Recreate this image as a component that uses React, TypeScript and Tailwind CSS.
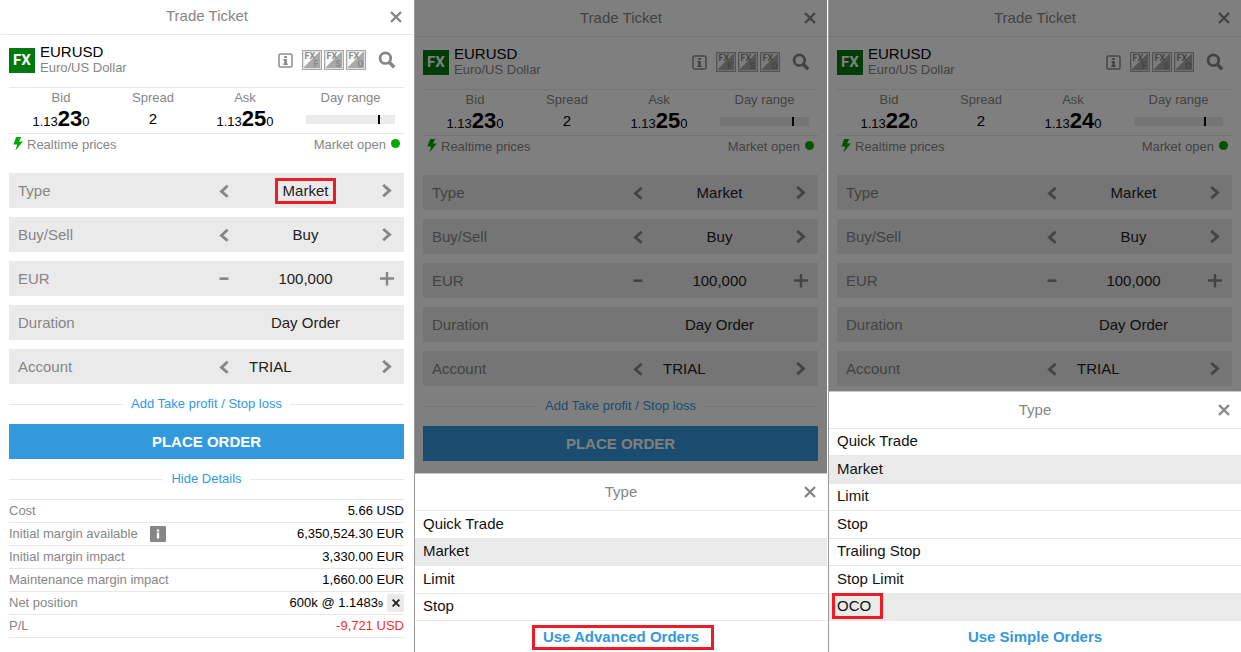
import type { ReactNode } from "react";

const FX_KINDS = ["F", "S", "O"];

function CloseIcon() {
  return (
    <svg viewBox="0 0 12 12" className="size-3" fill="none" stroke="currentColor" strokeWidth="2.4">
      <path d="M1 1l10 10M11 1L1 11" />
    </svg>
  );
}

function ChevronLeft() {
  return (
    <svg viewBox="0 0 10 14" className="h-3.5 w-2.5" fill="none" stroke="currentColor" strokeWidth="2.8">
      <path d="M8.6 1.8L2.4 7.4l6.2 5.4" />
    </svg>
  );
}

function ChevronRight() {
  return (
    <svg viewBox="0 0 10 14" className="h-3.5 w-2.5" fill="none" stroke="currentColor" strokeWidth="2.8">
      <path d="M1.2 1l6.4 5.6-6.4 5.6" />
    </svg>
  );
}

function MinusIcon() {
  return (
    <svg viewBox="0 0 10 14" className="h-3.5 w-2.5" fill="currentColor">
      <path d="M.5 5.4h9V8h-9z" />
    </svg>
  );
}

function PlusIcon() {
  return (
    <svg viewBox="0 0 14 14" className="size-3.5" fill="currentColor">
      <path d="M5.8 0h2.4v5.3H14v2.5H8.2V13.4H5.8V7.8H0V5.3h5.8z" />
    </svg>
  );
}

function InfoIcon() {
  return (
    <svg viewBox="0 0 15 15" className="size-[15px]">
      <rect x="1" y="1" width="13" height="13" rx="1.6" fill="none" stroke="#8c8c8c" strokeWidth="1.5" />
      <path d="M6.3 3h2.5v2H6.3zM5.4 6h3.4v4.5h.9V12H5.3v-1.5h1V7.4h-.9z" fill="#858585" />
    </svg>
  );
}

function FxKindIcon({ kind }: { kind: string }) {
  return (
    <svg viewBox="0 0 20 20" className="size-5">
      <rect width="20" height="20" fill="#a8a8a8" />
      <path d="M1 1h18v18H1z" fill="#e0e0e0" />
      <path d="M2 2h16v16H2z" fill="#aaaaaa" />
      <path d="M2 2h15L2 17z" fill="#fbfbfb" />
      <text x="2.6" y="9.4" fontSize="9" fontWeight="700" fontFamily="Roboto, sans-serif" fill="#8a8a8a">FX</text>
      <text x="11.6" y="16.6" fontSize="9" fontWeight="700" fontFamily="Roboto, sans-serif" fill="#888888">{kind}</text>
    </svg>
  );
}

function SearchIcon() {
  return (
    <svg viewBox="0 0 18 18" className="size-[18px]" fill="none" stroke="#858585">
      <circle cx="7.4" cy="7.2" r="5.3" strokeWidth="2.7" />
      <path d="M11.2 11.2l5 5" strokeWidth="3.4" />
    </svg>
  );
}

function BoltIcon() {
  return (
    <svg viewBox="0 0 10 16" className="h-4 w-2.5" fill="#00a800">
      <path d="M3.2 0h5L6 4.4h3.8L2.4 13.6l1.8-6H.4z" />
    </svg>
  );
}

function TitleBar({ title, tall = false }: { title: string; tall?: boolean }) {
  return (
    <header
      className={`relative flex items-center justify-center border-b border-[#e8e8e8] text-[15px] text-[#868686] ${
        tall ? "h-[37px]" : "h-[35px] pb-px"
      }`}
    >
      <h2>{title}</h2>
      <button type="button" aria-label="Close" className="absolute right-[11px] text-[#868686]">
        <CloseIcon />
      </button>
    </header>
  );
}

function Price({ label, big }: { label: string; big: string }) {
  return (
    <div className="text-center">
      <div className="leading-[19px] text-[#868686]">{label}</div>
      <div className="leading-6 text-black">
        <span className="text-[13px]">1.13</span>
        <span className="text-[22px] font-bold">{big}</span>
        <span className="text-[13px]">0</span>
      </div>
    </div>
  );
}

function Field({
  label,
  before,
  after,
  children,
}: {
  label: string;
  before?: ReactNode;
  after?: ReactNode;
  children: ReactNode;
}) {
  return (
    <div className="flex h-[35px] items-center bg-[#eaeaea] pl-[9px] text-[15px] text-[#868686]">
      <div className="flex-1 pt-px">{label}</div>
      <div className="flex w-[197px] items-center">
        <div className="flex w-[34px] justify-center">
          {before && (
            <button type="button" aria-label={`Previous ${label}`}>
              {before}
            </button>
          )}
        </div>
        <div className="flex min-w-0 flex-1 justify-center pt-px text-[#222]">{children}</div>
        <div className="flex w-[34px] justify-center">
          {after && (
            <button type="button" aria-label={`Next ${label}`}>
              {after}
            </button>
          )}
        </div>
      </div>
    </div>
  );
}

function RuledLink({ children }: { children: string }) {
  return (
    <div className="flex h-10 items-center gap-2">
      <span className="h-px flex-1 bg-[#e8e8e8]" />
      <button type="button" className="text-[13px] text-[#3399dd]">
        {children}
      </button>
      <span className="h-px flex-1 bg-[#e8e8e8]" />
    </div>
  );
}

function DetailRow({ label, children, negative = false }: { label: ReactNode; children: ReactNode; negative?: boolean }) {
  return (
    <tr className="h-[23px] border-y border-[#e8e8e8] leading-[22px]">
      <th scope="row" className="p-0 text-left font-normal text-[#868686]">
        {label}
      </th>
      <td className={`p-0 text-right ${negative ? "text-[#ee3322]" : "text-black"}`}>{children}</td>
    </tr>
  );
}

function Details() {
  return (
    <table className="w-full border-collapse">
      <tbody>
        <DetailRow label="Cost">5.66 USD</DetailRow>
        <DetailRow
          label={
            <span className="flex items-center gap-3">
              Initial margin available
              <svg viewBox="0 0 16 16" className="size-4">
                <rect width="16" height="16" rx="1" fill="#868686" />
                <path d="M6.8 3.5h2.4v2H6.8zM6.8 6.5h2.4v6H6.8z" fill="#fff" />
              </svg>
            </span>
          }
        >
          6,350,524.30 EUR
        </DetailRow>
        <DetailRow label="Initial margin impact">3,330.00 EUR</DetailRow>
        <DetailRow label="Maintenance margin impact">1,660.00 EUR</DetailRow>
        <DetailRow label="Net position">
          <span className="flex items-center justify-end gap-1">
            <span>
              600k @ 1.1483<span className="text-[9px] leading-none">9</span>
            </span>
            <button
              type="button"
              aria-label="Close position"
              className="flex h-[18px] w-[17px] items-center justify-center rounded-xs bg-[#eaeaea]"
            >
              <svg viewBox="0 0 8 8" className="size-2" fill="none" stroke="#222" strokeWidth="1.9">
                <path d="M.6.6l6.8 6.8M7.4.6L.6 7.4" />
              </svg>
            </button>
          </span>
        </DetailRow>
        <DetailRow label="P/L" negative>
          -9,721 USD
        </DetailRow>
      </tbody>
    </table>
  );
}

type TicketProps = {
  id: string;
  bid: string;
  ask: string;
  mark: number;
  tall?: boolean;
  marked?: boolean;
  actions?: boolean;
  details?: boolean;
};

function Ticket({ id, bid, ask, mark, tall, marked, actions, details }: TicketProps) {
  return (
    <div>
      <TitleBar title="Trade Ticket" tall={tall} />
      <div className="pr-[9px] pl-2 text-[13px]">
        <div className="flex h-[53px] items-center border-b border-[#e8e8e8] pb-0.5">
          <div className="flex h-[25px] w-[26px] items-center justify-center bg-[#007a10] font-[Roboto,sans-serif] text-[15px] font-bold text-white">
            FX
          </div>
          <div className="ml-[5px] flex-1 leading-4">
            <div className="text-[15px] text-black">EURUSD</div>
            <div className="text-[#868686]">Euro/US Dollar</div>
          </div>
          <button type="button" aria-label="Instrument info" className="mr-[9px]">
            <InfoIcon />
          </button>
          <div className="mr-1 flex gap-0.5">
            {FX_KINDS.map((kind) => (
              <FxKindIcon key={kind} kind={kind} />
            ))}
          </div>
          <button type="button" aria-label="Search" className="flex w-[34px] justify-center">
            <SearchIcon />
          </button>
        </div>

        <div className="grid h-[46px] grid-cols-[92fr_92fr_92fr_113fr] border-b border-[#e8e8e8] pl-1.5">
          <Price label="Bid" big={bid} />
          <div className="text-center">
            <div className="leading-[19px] text-[#868686]">Spread</div>
            <div className="text-[15px] leading-6 text-black">2</div>
          </div>
          <Price label="Ask" big={ask} />
          <div className="pr-[9px] pl-[15px] text-center">
            <div className="leading-[19px] text-[#868686]">Day range</div>
            <div className="relative mt-2 h-[9px] bg-[#ebebeb]">
              <div className="absolute inset-y-0 w-0.5 bg-black" style={{ left: `${mark}%` }} />
            </div>
          </div>
        </div>

        <div className="mb-[18px] flex h-[21px] items-center text-[#868686]">
          <span className="flex flex-1 items-center gap-1 pl-1">
            <BoltIcon />
            Realtime prices
          </span>
          <span>Market open</span>
          <span className="mr-1 mb-0.5 ml-[5px] size-[9px] rounded-full bg-[#00a800]" />
        </div>

        <div className="grid gap-[9px]">
          <Field label="Type" before={<ChevronLeft />} after={<ChevronRight />}>
            <button
              type="button"
              className={marked ? "h-[26px] border-3 border-[#ed1c24] px-[5px] leading-5" : ""}
            >
              Market
            </button>
          </Field>
          <Field label="Buy/Sell" before={<ChevronLeft />} after={<ChevronRight />}>
            <button type="button">Buy</button>
          </Field>
          <Field label="EUR" before={<MinusIcon />} after={<PlusIcon />}>
            <input
              id={`${id}-amount`}
              aria-label="EUR amount"
              defaultValue="100,000"
              className="w-full bg-transparent text-center outline-none"
            />
          </Field>
          <Field label="Duration">
            <button type="button">Day Order</button>
          </Field>
          <Field label="Account" before={<ChevronLeft />} after={<ChevronRight />}>
            <button type="button" className="flex-1 pl-2 text-left">
              TRIAL
            </button>
          </Field>
        </div>

        {actions && (
          <>
            <RuledLink>Add Take profit / Stop loss</RuledLink>
            <button type="button" className="h-[35px] w-full bg-[#3399dd] pt-px text-[15px] font-bold text-white">
              PLACE ORDER
            </button>
          </>
        )}
        {details && (
          <>
            <RuledLink>Hide Details</RuledLink>
            <Details />
          </>
        )}
      </div>
    </div>
  );
}

type SheetProps = {
  options: string[];
  selected: string[];
  boxed?: string;
  footer: string;
  footerBoxed?: boolean;
  listHeight: string;
};

function TypeSheet({ options, selected, boxed, footer, footerBoxed, listHeight }: SheetProps) {
  return (
    <section className="absolute inset-x-0 bottom-0 border-t border-[#c8c8c8] bg-white">
      <TitleBar title="Type" tall />
      <ul className={`grid auto-rows-fr text-[15px] text-[#111] ${listHeight}`}>
        {options.map((option) => (
          <li
            key={option}
            className={`flex items-center border-b border-[#e8e8e8] pb-px pl-2 ${selected.includes(option) ? "bg-[#eaeaea]" : ""}`}
          >
            <button type="button" className="relative">
              {option}
              {option === boxed && (
                <span className="absolute -top-0.5 -right-3 -bottom-px -left-[5px] border-3 border-[#ed1c24]" />
              )}
            </button>
          </li>
        ))}
      </ul>
      <div className="flex h-[31px] items-center justify-center pt-0.5">
        <button type="button" className="relative text-[15px] font-bold text-[#3399dd]">
          {footer}
          {footerBoxed && (
            <span className="absolute -inset-y-px -right-[15px] -left-[11px] border-3 border-[#ed1c24]" />
          )}
        </button>
      </div>
    </section>
  );
}

function Panel({ children, className }: { children: ReactNode; className: string }) {
  return <div className={`relative overflow-hidden border-l bg-white ${className}`}>{children}</div>;
}

function Shade() {
  return <div className="absolute inset-0 bg-black/50" />;
}

export default function App() {
  return (
    <main className="grid min-h-screen grid-cols-[414fr_414fr_413fr] font-['Liberation_Sans',Arial,sans-serif] text-[13px]">
      <Panel className="border-r border-white">
        <Ticket id="basic" bid="23" ask="25" mark={81} marked actions details />
      </Panel>
      <Panel className="border-r border-r-white border-l-[#999]">
        <Ticket id="simple" bid="23" ask="25" mark={81} tall actions />
        <Shade />
        <TypeSheet
          options={["Quick Trade", "Market", "Limit", "Stop"]}
          selected={["Market"]}
          footer="Use Advanced Orders"
          footerBoxed
          listHeight="h-[110px]"
        />
      </Panel>
      <Panel className="border-l-[#999]">
        <Ticket id="advanced" bid="22" ask="24" mark={79} tall />
        <Shade />
        <TypeSheet
          options={["Quick Trade", "Market", "Limit", "Stop", "Trailing Stop", "Stop Limit", "OCO"]}
          selected={["Market", "OCO"]}
          boxed="OCO"
          footer="Use Simple Orders"
          listHeight="h-[192px]"
        />
      </Panel>
    </main>
  );
}
